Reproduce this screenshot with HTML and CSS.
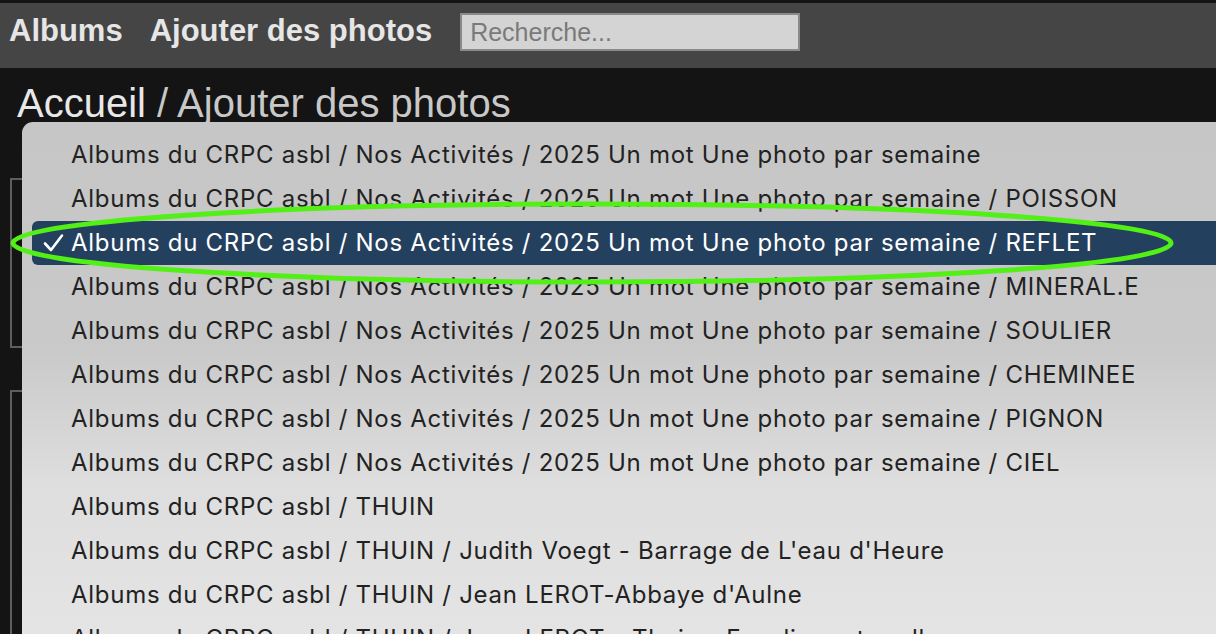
FILE: index.html
```html
<!DOCTYPE html>
<html lang="fr">
<head>
<meta charset="utf-8">
<title>Ajouter des photos</title>
<link rel="stylesheet" href="styles.css">
</head>
<body>
<header class="topbar">
  <nav class="nav">
    <a class="nav-link" href="#">Albums</a>
    <a class="nav-link" href="#">Ajouter des photos</a>
  </nav>
  <input class="search" type="text" placeholder="Recherche...">
</header>
<main class="page">
  <h1 class="crumbs"><span class="crumb-home">Accueil</span> / Ajouter des photos</h1>
  <div class="form">
    <fieldset class="box box-a"></fieldset>
    <fieldset class="box box-b"></fieldset>
  </div>
</main>

<div class="menu">
  <div class="item">Albums du CRPC asbl / Nos Activités / 2025 Un mot Une photo par semaine</div>
  <div class="item">Albums du CRPC asbl / Nos Activités / 2025 Un mot Une photo par semaine / POISSON</div>
  <div class="item selected"><svg class="check" width="22" height="20" viewBox="0 0 22 20" aria-hidden="true"><path d="M2 10.5 L8 17 L19 2.5" fill="none" stroke="#ffffff" stroke-width="2.6" stroke-linecap="round" stroke-linejoin="round"/></svg>Albums du CRPC asbl / Nos Activités / 2025 Un mot Une photo par semaine / REFLET</div>
  <div class="item">Albums du CRPC asbl / Nos Activités / 2025 Un mot Une photo par semaine / MINERAL.E</div>
  <div class="item">Albums du CRPC asbl / Nos Activités / 2025 Un mot Une photo par semaine / SOULIER</div>
  <div class="item">Albums du CRPC asbl / Nos Activités / 2025 Un mot Une photo par semaine / CHEMINEE</div>
  <div class="item">Albums du CRPC asbl / Nos Activités / 2025 Un mot Une photo par semaine / PIGNON</div>
  <div class="item">Albums du CRPC asbl / Nos Activités / 2025 Un mot Une photo par semaine / CIEL</div>
  <div class="item">Albums du CRPC asbl / THUIN</div>
  <div class="item">Albums du CRPC asbl / THUIN / Judith Voegt - Barrage de L'eau d'Heure</div>
  <div class="item">Albums du CRPC asbl / THUIN / Jean LEROT-Abbaye d'Aulne</div>
  <div class="item">Albums du CRPC asbl / THUIN / Jean LEROT - Thuin - Escaliers et ruelles</div>
</div>

<svg class="mark" width="1216" height="634" viewBox="0 0 1216 634" aria-hidden="true">
  <ellipse cx="592" cy="243" rx="579" ry="39" fill="none" stroke="#52f016" stroke-width="5"/>
</svg>
</body>
</html>
```
FILE: styles.css
```css
html, body {
  margin: 0;
  padding: 0;
}
body {
  width: 1216px;
  height: 634px;
  overflow: hidden;
  background: #141414;
  font-family: "Liberation Sans", Arial, sans-serif;
  position: relative;
}
.topbar {
  margin-top: 3px;
  height: 65px;
  background: #454545;
  display: flex;
  align-items: flex-start;
  padding: 10px 0 0 9px;
  box-sizing: border-box;
  gap: 28px;
}
.nav {
  display: flex;
  gap: 27px;
  padding-top: 1px;
}
.nav-link {
  color: #e6e6e6;
  font-weight: bold;
  font-size: 31px;
  text-decoration: none;
  line-height: 34px;
}
.search {
  width: 340px;
  height: 38px;
  box-sizing: border-box;
  background: #d4d4d4;
  border: 2px solid #8a8a8a;
  font-family: "Liberation Sans", Arial, sans-serif;
  font-size: 25px;
  padding: 0 8px;
  margin: 0;
  outline: none;
}
.search::placeholder {
  color: #7a7a7a;
}
.page {
  padding: 0 0 0 17px;
}
.crumbs {
  margin: 0;
  padding-top: 12px;
  font-weight: normal;
  font-size: 40px;
  line-height: 46px;
  color: #c8c8c8;
}
.crumb-home {
  color: #e8e8e8;
}
.form {
  margin-left: -7px;
  padding-top: 52px;
  display: flex;
  flex-direction: column;
  gap: 42px;
}
.box {
  margin: 0;
  padding: 0;
  width: 1180px;
  border: 2px solid #5e5e5e;
  box-sizing: border-box;
}
.box-a { height: 170px; }
.box-b { height: 300px; }

.menu {
  position: absolute;
  left: 22px;
  top: 122px;
  width: 1240px;
  height: 560px;
  box-sizing: border-box;
  padding: 11px 10px 0 10px;
  border-radius: 11px;
  background: linear-gradient(180deg, #c6c6c6 0%, #c9c9c9 40%, #dedede 65%, #e6e6e6 100%);
  font-family: Inter, "Noto Sans", sans-serif;
  font-size: 24px;
  letter-spacing: 0.72px;
  color: #222222;
}
.item {
  height: 44px;
  line-height: 44px;
  padding-left: 39px;
  white-space: nowrap;
  position: relative;
}
.item.selected {
  background: #24405f;
  color: #ffffff;
  border-radius: 6px;
}
.check {
  position: absolute;
  left: 11px;
  top: 12px;
}
.mark {
  position: absolute;
  left: 0;
  top: 0;
  pointer-events: none;
}
```
